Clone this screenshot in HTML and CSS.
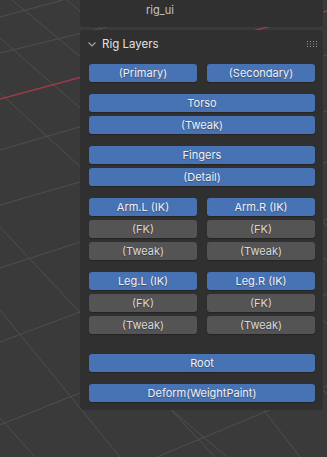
FILE: index.html
```html
<!DOCTYPE html>
<html lang="en">

<head>
    <meta charset="UTF-8">
    <meta name="viewport" content="width=device-width, initial-scale=1.0">
    <title>rig_ui</title>
    <link rel="stylesheet" href="styles.css">
</head>

<body>
    <!-- viewport grid behind the sidebar -->
    <svg class="grid" width="327" height="457" viewBox="0 0 327 457">
        <g stroke="#4f4f4f" stroke-width="1" fill="none">
            <line x1="67" y1="0" x2="327" y2="226" />
            <line x1="12" y1="0" x2="327" y2="261" />
            <line x1="0" y1="38" x2="327" y2="324" />
            <line x1="0" y1="93" x2="327" y2="394" />
            <line x1="0" y1="227" x2="215" y2="457" />
            <line x1="0" y1="310" x2="120" y2="457" />
            <line x1="0" y1="418" x2="35" y2="457" />
            <line x1="100" y1="349" x2="227" y2="457" />
            <line x1="200" y1="328" x2="300" y2="457" />
            <line x1="0" y1="17" x2="63" y2="0" />
            <line x1="0" y1="53" x2="217" y2="0" />
            <line x1="0" y1="150" x2="327" y2="55" />
            <line x1="0" y1="205" x2="327" y2="111" />
            <line x1="0" y1="268" x2="327" y2="162" />
            <line x1="0" y1="342" x2="327" y2="219" />
            <line x1="0" y1="425" x2="327" y2="294" />
            <line x1="157" y1="457" x2="327" y2="386" />
        </g>
        <line x1="0" y1="99" x2="327" y2="11" stroke="#9b3b4c" stroke-width="1.3" />
    </svg>

    <div class="sidebar">
        <div class="tab">rig_ui</div>

        <div class="panel">
            <div class="panel-head">
                <svg class="chevron" width="10" height="8" viewBox="0 0 10 8">
                    <path d="M1.5 2.5 L5 6 L8.5 2.5" stroke="#a0a0a0" stroke-width="1.2" fill="none" />
                </svg>
                <span class="panel-title">Rig Layers</span>
                <svg class="grip" width="10" height="6" viewBox="0 0 10 6">
                    <g fill="#9a9a9a">
                        <rect x="0" y="0" width="1" height="1" /><rect x="3" y="0" width="1" height="1" />
                        <rect x="6" y="0" width="1" height="1" /><rect x="9" y="0" width="1" height="1" />
                        <rect x="0" y="2.5" width="1" height="1" /><rect x="3" y="2.5" width="1" height="1" />
                        <rect x="6" y="2.5" width="1" height="1" /><rect x="9" y="2.5" width="1" height="1" />
                        <rect x="0" y="5" width="1" height="1" /><rect x="3" y="5" width="1" height="1" />
                        <rect x="6" y="5" width="1" height="1" /><rect x="9" y="5" width="1" height="1" />
                    </g>
                </svg>
            </div>

            <div class="panel-body">
                <div class="group pair">
                    <div class="btn on">(Primary)</div>
                    <div class="btn on">(Secondary)</div>
                </div>

                <div class="group">
                    <div class="btn on">Torso</div>
                    <div class="btn on">(Tweak)</div>
                </div>

                <div class="group">
                    <div class="btn on">Fingers</div>
                    <div class="btn on">(Detail)</div>
                </div>

                <div class="group pair">
                    <div class="col">
                        <div class="btn on">Arm.L (IK)</div>
                        <div class="btn">(FK)</div>
                        <div class="btn">(Tweak)</div>
                    </div>
                    <div class="col">
                        <div class="btn on">Arm.R (IK)</div>
                        <div class="btn">(FK)</div>
                        <div class="btn">(Tweak)</div>
                    </div>
                </div>

                <div class="group pair">
                    <div class="col">
                        <div class="btn on">Leg.L (IK)</div>
                        <div class="btn">(FK)</div>
                        <div class="btn">(Tweak)</div>
                    </div>
                    <div class="col">
                        <div class="btn on">Leg.R (IK)</div>
                        <div class="btn">(FK)</div>
                        <div class="btn">(Tweak)</div>
                    </div>
                </div>

                <div class="group root">
                    <div class="btn on">Root</div>
                </div>

                <div class="group">
                    <div class="btn on">Deform(WeightPaint)</div>
                </div>
            </div>
        </div>
    </div>
</body>

</html>
```

FILE: styles.css
```css
body {
    margin: 0;
    padding: 0;
    width: 327px;
    height: 457px;
    overflow: hidden;
    position: relative;
    background-color: #3a3a3a;
    font-family: Inter, "Noto Sans", sans-serif;
    font-size: 11px;
}

.grid {
    position: absolute;
    left: 0;
    top: 0;
}

.sidebar {
    position: relative;
    margin-left: 80px;
    width: 243px;
}

.tab {
    height: 27px;
    box-sizing: border-box;
    padding-left: 66px;
    line-height: 21px;
    background-color: #303030;
    border-radius: 0 0 4px 4px;
    color: #c4c4c4;
}

.panel {
    margin-top: 3px;
    padding: 0 8px 8px 9px;
    background-color: #303030;
    border-radius: 4px;
}

.panel-head {
    height: 28px;
    display: flex;
    align-items: center;
}

.chevron {
    margin-left: -2px;
    margin-right: 5px;
}

.panel-title {
    flex: 1;
    color: #e2e2e2;
    font-size: 11.5px;
}

.grip {
    margin-right: -2px;
}

.panel-body {
    padding-top: 6px;
    display: flex;
    flex-direction: column;
    gap: 12px;
}

.group {
    display: flex;
    flex-direction: column;
    gap: 4px;
}

.group.pair {
    flex-direction: row;
    gap: 10px;
}

.group.pair > .btn,
.col {
    flex: 1;
}

.col {
    display: flex;
    flex-direction: column;
    gap: 4px;
}

.group.root {
    margin-top: 8px;
}

.btn {
    height: 18px;
    line-height: 18px;
    text-align: center;
    border-radius: 3px;
    background-color: #545454;
    color: #d8d8d8;
    box-shadow: 0 1px 1px rgba(0, 0, 0, 0.25);
    text-shadow: 0 1px 1px rgba(0, 0, 0, 0.3);
}

.btn.on {
    background-color: #4772b3;
    color: #f0f0f0;
}
```
